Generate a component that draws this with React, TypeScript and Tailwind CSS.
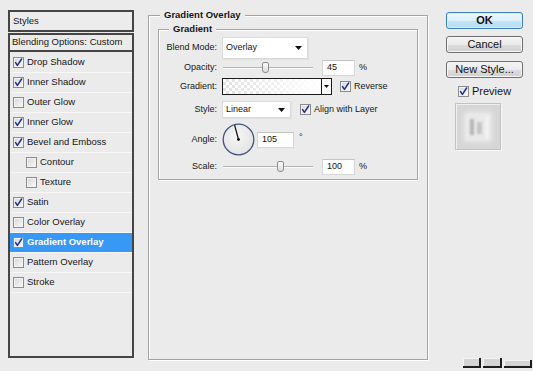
import React from "react";

const FONT = "font-['Liberation_Sans',Arial,sans-serif]";

function Check({ checked }: { checked: boolean }) {
  return (
    <span className="flex h-[11px] w-[11px] shrink-0 items-center justify-center border border-[#8a8c8f] bg-[linear-gradient(135deg,#d6d6d6,#fafafa)] shadow-[inset_0_0_0_1px_#f2f2f2]">
      {checked && (
        <svg width="9" height="9" viewBox="0 0 9 9">
          <path d="M1.6 4.6 L3.4 7.4 L7.6 1" stroke="#21318c" strokeWidth="1.5" fill="none" strokeLinecap="round" strokeLinejoin="round" />
        </svg>
      )}
    </span>
  );
}

function Tri() {
  return (
    <svg width="7" height="4" viewBox="0 0 7 4">
      <path d="M0 0 H7 L3.5 4 Z" fill="#111" />
    </svg>
  );
}

const rows = [
  { label: "Drop Shadow", checked: true },
  { label: "Inner Shadow", checked: true },
  { label: "Outer Glow", checked: false },
  { label: "Inner Glow", checked: true },
  { label: "Bevel and Emboss", checked: true },
  { label: "Contour", checked: false, indent: true },
  { label: "Texture", checked: false, indent: true },
  { label: "Satin", checked: true },
  { label: "Color Overlay", checked: false },
  { label: "Gradient Overlay", checked: true, selected: true },
  { label: "Pattern Overlay", checked: false },
  { label: "Stroke", checked: false },
];

function Slider({ pos }: { pos: number }) {
  return (
    <div className="relative h-[17px] w-[90px]">
      <div className="absolute left-0 right-0 top-[8px] h-[1px] bg-[#b4b4b4] shadow-[0_1px_0_#fafafa]" />
      <div
        className="absolute top-[3px] h-[11px] w-[7px] rounded-b-[3px] rounded-t-[2px] border border-[#8e8e8e] bg-[linear-gradient(to_bottom,#fdfdfd,#dcdcdc)]"
        style={{ left: pos - 3 }}
      />
    </div>
  );
}

function Num({ value, w }: { value: string; w: string }) {
  return (
    <div className={`flex h-[16px] ${w} items-center border border-[#d6d6d6] border-t-[#c4c4c4] bg-white pl-[4px] text-[9px] text-[#111]`}>
      {value}
    </div>
  );
}

export default function App() {
  return (
    <div className={`relative h-[371px] w-[533px] overflow-hidden bg-[#ebebeb] text-[#161616] ${FONT}`}>
      <div className="flex items-start">
        {/* Left styles list */}
        <div className="ml-[8px] mt-[10px] flex w-[126px] flex-col">
          <div className="flex h-[22px] items-center border-2 border-[#454545] bg-[#ececec] pl-[3px] text-[9.5px]">
            Styles
          </div>
          <div className="mt-[1px] flex h-[325px] flex-col border-2 border-[#454545] bg-[#ebebeb]">
            <div className="flex h-[17px] items-center border-b-2 border-[#454545] pl-[2px] text-[9.5px]">
              Blending Options: Custom
            </div>
            <div className="mt-[1px] flex flex-col">
              {rows.map((r) => (
                <div
                  key={r.label}
                  className={`flex h-[20px] items-center border-b border-[#f7f7f7] ${
                    r.indent ? "pl-[16px]" : "pl-[3px]"
                  } ${r.selected ? "bg-[#3798f5] text-white" : ""}`}
                >
                  <Check checked={r.checked} />
                  <span className={`ml-[3px] text-[9.5px] ${r.selected ? "font-bold" : ""}`}>{r.label}</span>
                </div>
              ))}
            </div>
          </div>
        </div>

        {/* Middle: Gradient Overlay */}
        <div className="relative ml-[14px] mt-[15px] h-[345px] w-[280px] border border-[#a4a4a4] shadow-[inset_1px_1px_0_#fff,1px_1px_0_#fff]">
          <div className="absolute left-[11px] top-[-7px] bg-[#ebebeb] px-[4px] text-[9.5px] font-bold leading-[12px]">
            Gradient Overlay
          </div>
          <div className="relative ml-[9px] mt-[13px] h-[151px] w-[260px] border border-[#a4a4a4] shadow-[inset_1px_1px_0_#fff,1px_1px_0_#fff]">
            <div className="absolute left-[10px] top-[-7px] bg-[#ebebeb] px-[4px] text-[9.5px] font-bold leading-[12px]">
              Gradient
            </div>
            <div className="flex flex-col pt-[7px] text-[9px]">
              {/* Blend Mode */}
              <div className="flex h-[22px] items-center">
                <span className="w-[58px] text-right">Blend Mode:</span>
                <div className="ml-[5px] flex h-[22px] w-[86px] items-center justify-between border border-[#dadada] bg-white pl-[3px] pr-[5px] shadow-[1px_1px_0_#e0e0e0]">
                  <span>Overlay</span>
                  <Tri />
                </div>
              </div>
              {/* Opacity */}
              <div className="flex h-[17px] items-center">
                <span className="w-[58px] text-right">Opacity:</span>
                <div className="ml-[6px]">
                  <Slider pos={42} />
                </div>
                <div className="ml-[9px]">
                  <Num value="45" w="w-[33px]" />
                </div>
                <span className="ml-[4px]">%</span>
              </div>
              {/* Gradient */}
              <div className="mt-[2px] flex h-[17px] items-center">
                <span className="w-[58px] text-right">Gradient:</span>
                <div className="ml-[5px] flex h-[17px] w-[110px] border border-[#1c1c1c]">
                  <div className="flex-1 bg-[linear-gradient(to_right,rgba(255,255,255,0.1),#ffffff),repeating-conic-gradient(#dedede_0%_25%,#ffffff_0%_50%)] [background-size:100%_100%,6px_6px]" />
                  <div className="flex w-[10px] items-center justify-center border-l border-[#1c1c1c] bg-white">
                    <svg width="5" height="3" viewBox="0 0 5 3">
                      <path d="M0 0 H5 L2.5 3 Z" fill="#111" />
                    </svg>
                  </div>
                </div>
                <div className="ml-[8px]">
                  <Check checked={true} />
                </div>
                <span className="ml-[3px]">Reverse</span>
              </div>
              {/* Style */}
              <div className="mt-[6px] flex h-[17px] items-center">
                <span className="w-[58px] text-right">Style:</span>
                <div className="ml-[5px] flex h-[17px] w-[69px] items-center justify-between border border-[#dadada] bg-white pl-[3px] pr-[5px] shadow-[1px_1px_0_#e0e0e0]">
                  <span>Linear</span>
                  <Tri />
                </div>
                <div className="ml-[9px]">
                  <Check checked={true} />
                </div>
                <span className="ml-[3px]">Align with Layer</span>
              </div>
              {/* Angle */}
              <div className="mt-[5px] flex h-[33px] items-center">
                <span className="w-[58px] text-right">Angle:</span>
                <div className="ml-[5px]">
                  <svg width="33" height="33" viewBox="0 0 33 33">
                    <defs>
                      <radialGradient id="dialg" cx="0.45" cy="0.4" r="0.6">
                        <stop offset="0" stopColor="#f6f6f6" />
                        <stop offset="1" stopColor="#e4e4e4" />
                      </radialGradient>
                    </defs>
                    <circle cx="16.5" cy="16.5" r="15.3" fill="url(#dialg)" stroke="#43537c" strokeWidth="1.3" />
                    <line x1="16.5" y1="16.5" x2="12.6" y2="2.2" stroke="#1a1a1a" strokeWidth="1.3" />
                    <circle cx="16.5" cy="16.5" r="1.4" fill="#111" />
                  </svg>
                </div>
                <div className="ml-[2px]">
                  <Num value="105" w="w-[37px]" />
                </div>
                <span className="ml-[5px] self-start pt-[10px] leading-[9px]">°</span>
              </div>
              {/* Scale */}
              <div className="mt-[2px] flex h-[17px] items-center">
                <span className="w-[58px] text-right">Scale:</span>
                <div className="ml-[6px]">
                  <Slider pos={57} />
                </div>
                <div className="ml-[9px]">
                  <Num value="100" w="w-[33px]" />
                </div>
                <span className="ml-[4px]">%</span>
              </div>
            </div>
          </div>
        </div>

        {/* Right buttons */}
        <div className="ml-[18px] mt-[12px] flex w-[77px] flex-col text-[11px]">
          <button className="flex h-[17px] items-center justify-center rounded-[3px] border border-[#3c7fb1] bg-[linear-gradient(to_bottom,#eef7fd_0%,#dcf0fc_50%,#c4e4f9_51%,#b6dcf5_100%)] font-bold text-[#111] shadow-[inset_0_0_0_1px_#d8eefb]">
            OK
          </button>
          <button className="mt-[7px] flex h-[17px] items-center justify-center rounded-[3px] border border-[#6f6f6f] bg-[linear-gradient(to_bottom,#f4f4f4_0%,#ebebeb_50%,#dddddd_51%,#d0d0d0_100%)] text-[#111] shadow-[inset_0_0_0_1px_#f6f6f6]">
            Cancel
          </button>
          <button className="mt-[8px] flex h-[17px] items-center justify-center rounded-[3px] border border-[#6f6f6f] bg-[linear-gradient(to_bottom,#f4f4f4_0%,#ebebeb_50%,#dddddd_51%,#d0d0d0_100%)] text-[#111] shadow-[inset_0_0_0_1px_#f6f6f6]">
            New Style...
          </button>
          <div className="mt-[7px] flex h-[12px] items-center pl-[12px]">
            <Check checked={true} />
            <span className="ml-[3px]">Preview</span>
          </div>
          <div className="ml-[9px] mt-[6px] flex h-[47px] w-[46px] items-center justify-center border border-[#c2c2c2] bg-[#d6d6d6] shadow-[inset_1px_1px_0_#efefef,1px_1px_0_#f7f7f7]">
            <div className="relative h-[28px] w-[26px] rounded-[3px] bg-[#e9e9e9] blur-[1px] shadow-[0_0_4px_2px_#e4e4e4]">
              <div className="absolute left-[5px] top-[6px] h-[16px] w-[4px] bg-[#b5b5b5]" />
              <div className="absolute left-[12px] top-[9px] h-[12px] w-[5px] bg-[#c4c4c4]" />
              <div className="absolute right-[3px] top-[3px] h-[22px] w-[2px] bg-[#f8f8f8]" />
            </div>
          </div>
        </div>
      </div>

      {/* bottom-right resize grip artifacts */}
      <div className="absolute left-[463px] top-[358px] h-[10px] w-[18px] border-b-2 border-r-2 border-[#1e1e1e] bg-[#d4d4d4] shadow-[inset_1px_1px_0_#f4f4f4]" />
      <div className="absolute left-[483px] top-[358px] h-[10px] w-[19px] border-b-2 border-r-2 border-[#1e1e1e] bg-[#d4d4d4] shadow-[inset_1px_1px_0_#f4f4f4]" />
      <div className="absolute left-[504px] top-[360px] h-[8px] w-[28px] border-b-2 border-r-2 border-[#1e1e1e] bg-[#d4d4d4] shadow-[inset_1px_1px_0_#f4f4f4]" />
    </div>
  );
}
